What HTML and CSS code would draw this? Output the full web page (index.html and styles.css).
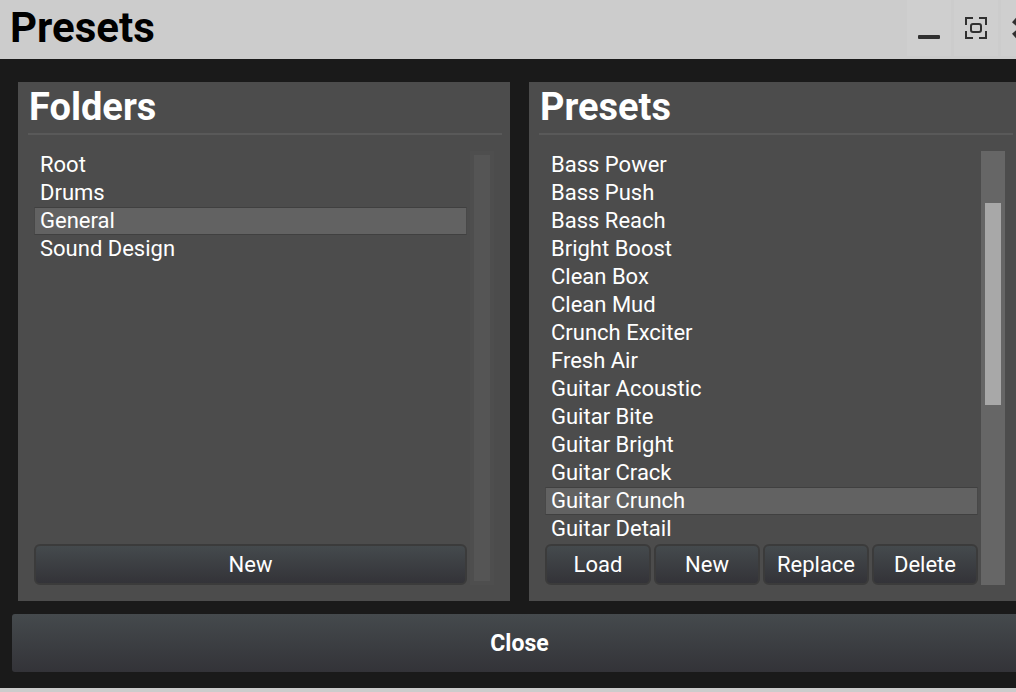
FILE: index.html
```html
<!DOCTYPE html>
<html lang="en">
<head>
    <meta charset="UTF-8">
    <meta name="viewport" content="width=device-width, initial-scale=1.0">
    <title>Presets</title>
    <link rel="stylesheet" href="styles.css">
</head>
<body>
    <div class="window">
        <header class="titlebar">
            <h1>Presets</h1>
            <div class="window-controls">
                <button type="button" aria-label="Minimize">
                    <svg width="24" height="24" viewBox="0 0 24 24"><rect x="1" y="19" width="22" height="4" rx="1" fill="#303030"/></svg>
                </button>
                <button type="button" aria-label="Maximize">
                    <svg width="24" height="24" viewBox="0 0 24 24" fill="none" stroke="#303030" stroke-width="2">
                        <path d="M9 2H2v7M15 2h7v7M9 22H2v-7M15 22h7v-7"/>
                        <rect x="7" y="8" width="10" height="8" rx="2"/>
                    </svg>
                </button>
                <button type="button" aria-label="Close window">
                    <svg width="24" height="24" viewBox="0 0 24 24" stroke="#303030" stroke-width="6"><path d="M3 4l18 16M21 4L3 20"/></svg>
                </button>
            </div>
        </header>

        <main class="panels">
            <section class="panel">
                <h2>Folders</h2>
                <div class="panel-body">
                    <div class="panel-content">
                        <ul class="list">
                            <li><button type="button">Root</button></li>
                            <li><button type="button">Drums</button></li>
                            <li><button type="button" class="selected">General</button></li>
                            <li><button type="button">Sound Design</button></li>
                        </ul>
                        <div class="actions">
                            <button type="button" class="btn">New</button>
                        </div>
                    </div>
                    <div class="scrollbar disabled"><div class="thumb"></div></div>
                </div>
            </section>

            <section class="panel">
                <h2>Presets</h2>
                <div class="panel-body">
                    <div class="panel-content">
                        <ul class="list">
                            <li><button type="button">Bass Power</button></li>
                            <li><button type="button">Bass Push</button></li>
                            <li><button type="button">Bass Reach</button></li>
                            <li><button type="button">Bright Boost</button></li>
                            <li><button type="button">Clean Box</button></li>
                            <li><button type="button">Clean Mud</button></li>
                            <li><button type="button">Crunch Exciter</button></li>
                            <li><button type="button">Fresh Air</button></li>
                            <li><button type="button">Guitar Acoustic</button></li>
                            <li><button type="button">Guitar Bite</button></li>
                            <li><button type="button">Guitar Bright</button></li>
                            <li><button type="button">Guitar Crack</button></li>
                            <li><button type="button" class="selected">Guitar Crunch</button></li>
                            <li><button type="button">Guitar Detail</button></li>
                        </ul>
                        <div class="actions">
                            <button type="button" class="btn">Load</button>
                            <button type="button" class="btn">New</button>
                            <button type="button" class="btn">Replace</button>
                            <button type="button" class="btn">Delete</button>
                        </div>
                    </div>
                    <div class="scrollbar"><div class="thumb"></div></div>
                </div>
            </section>
        </main>

        <footer class="footer">
            <button type="button" class="btn-close">Close</button>
        </footer>
    </div>
</body>
</html>
```
FILE: styles.css
```css
:root {
    --frame: #cccccc;
    --background: #1a1a1a;
    --panel: #4c4c4c;
    --selected: #626262;
    --button-top: #454a4d;
    --button-bottom: #333338;
}

* {
    box-sizing: border-box;
}

body {
    margin: 0;
    overflow: hidden;
    background: var(--background);
    color: #fff;
    font-family: Roboto, sans-serif;
    font-size: 22px;
}

button {
    font: inherit;
    color: inherit;
    border: none;
    cursor: pointer;
}

/* the window runs a little past the right edge of the screen */
.window {
    display: flex;
    flex-direction: column;
    width: calc(100% + 23px);
    min-height: 100vh;
    border-bottom: 4px solid var(--frame);
}

.titlebar {
    display: flex;
    justify-content: space-between;
    height: 59px;
    padding-left: 10px;
    background: var(--frame);
    color: #000;
}

.titlebar h1 {
    margin: 0;
    font-size: 42px;
    line-height: 56px;
}

.window-controls {
    display: flex;
    flex: none;
    gap: 3px;
    height: 56px;
    margin-right: -6px;
}

.window-controls button {
    display: flex;
    align-items: center;
    justify-content: center;
    width: 44px;
    padding: 0;
    background: #cfcfcf;
}

.window-controls svg {
    flex: none;
}

.panels {
    display: grid;
    grid-template-columns: 1fr 1fr;
    gap: 19px;
    flex: 1;
    padding: 23px 18px 13px;
}

.panel {
    display: flex;
    flex-direction: column;
    padding: 0 8px 16px 10px;
    background: var(--panel);
}

.panel h2 {
    margin: 0;
    padding-left: 1px;
    border-bottom: 2px solid #595959;
    font-size: 38px;
    line-height: 51px;
}

.panel-body {
    display: flex;
    flex: 1;
    gap: 3px;
    padding: 16px 8px 0 6px;
}

.panel-content {
    display: flex;
    flex-direction: column;
    flex: 1;
    gap: 1px;
}

.list {
    flex: 1;
    margin: 0;
    padding: 0;
    list-style: none;
}

.list button {
    display: block;
    width: 100%;
    height: 28px;
    padding: 0 5px;
    border: 1px solid transparent;
    background: none;
    text-align: left;
    line-height: 26px;
}

.list .selected {
    border-color: #404040 #484848;
    background: var(--selected);
}

.actions {
    display: flex;
    gap: 3px;
}

.btn {
    flex: 1 1 0;
    height: 41px;
    padding: 0;
    border: 2px solid #3b3b3b;
    border-radius: 6px;
    background: linear-gradient(var(--button-top), var(--button-bottom));
}

.scrollbar {
    display: grid;
    grid-template-rows: 12% 1fr 180px;
    width: 24px;
    padding: 0 4px;
    background: #666;
}

.scrollbar .thumb {
    grid-row: 2;
    background: #a8a8a8;
}

.scrollbar.disabled {
    grid-template-rows: 1fr;
    padding: 4px;
    background: #4e4e4e;
}

.scrollbar.disabled .thumb {
    grid-row: 1;
    background: #555;
}

.footer {
    padding: 0 12px 16px;
}

.btn-close {
    width: 100%;
    height: 58px;
    border-radius: 3px;
    background: linear-gradient(var(--button-top), var(--button-bottom));
    font-size: 23px;
    font-weight: bold;
}
```
